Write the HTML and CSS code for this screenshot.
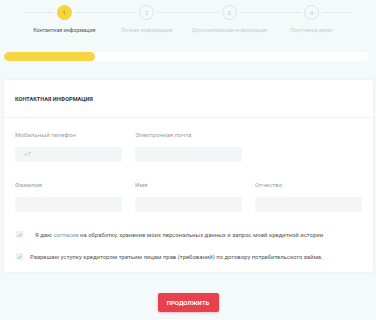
FILE: index.html
```html
<!DOCTYPE html>
<html lang="ru">
<head>
<meta charset="utf-8">
<link rel="stylesheet" href="styles.css">
</head>
<body>
<div class="steps">
  <div class="step active"><div class="circle">1</div><div class="slabel">Контактная информация</div></div>
  <div class="step"><div class="circle">2</div><div class="slabel">Личная информация</div></div>
  <div class="step"><div class="circle">3</div><div class="slabel">Дополнительная информация</div></div>
  <div class="step"><div class="circle">4</div><div class="slabel">Получение денег</div></div>
</div>
<div class="progress"><div class="fill" style="width:25%"></div></div>
<div class="card">
  <div class="card-head">КОНТАКТНАЯ ИНФОРМАЦИЯ</div>
  <div class="card-body">
    <div class="row">
      <div class="field"><div class="flabel">Мобильный телефон</div><div class="input">+7</div></div>
      <div class="field"><div class="flabel">Электронная почта</div><div class="input"></div></div>
      <div class="field empty"></div>
    </div>
    <div class="row">
      <div class="field"><div class="flabel">Фамилия</div><div class="input"></div></div>
      <div class="field"><div class="flabel">Имя</div><div class="input"></div></div>
      <div class="field"><div class="flabel">Отчество</div><div class="input"></div></div>
    </div>
    <div class="check first"><span class="box"><svg viewBox="0 0 8 8" width="6" height="6"><path d="M1.5 4.2 L3.2 5.8 L6.5 2.2" fill="none" stroke="#7fbf7a" stroke-width="1.1"/></svg></span><span class="ctext">Я даю <span class="link">согласие</span> на обработку, хранение моих персональных данных и запрос моей кредитной истории</span></div>
    <div class="check"><span class="box"><svg viewBox="0 0 8 8" width="6" height="6"><path d="M1.5 4.2 L3.2 5.8 L6.5 2.2" fill="none" stroke="#7fbf7a" stroke-width="1.1"/></svg></span><span class="ctext">Разрешаю уступку кредитором третьим лицам прав (требований) по договору потребительского займа.</span></div>
  </div>
</div>
<div class="actions"><button class="btn">ПРОДОЛЖИТЬ</button></div>
</body>
</html>
```
FILE: styles.css
```css
html, body { margin: 0; padding: 0; }
body {
  background: #f4f9fa;
  font-family: Roboto, "Noto Sans", sans-serif;
  color: #333;
  width: 376px;
  height: 320px;
  overflow: hidden;
}
.steps {
  display: grid;
  grid-template-columns: repeat(4, 1fr);
  margin: 0 23px;
  padding-top: 5px;
  position: relative;
  height: 42px;
}
.steps::before {
  content: "";
  position: absolute;
  left: 0; right: 0; top: 12px;
  height: 1px;
  background: #e3e8ea;
}
.step {
  display: flex;
  flex-direction: column;
  align-items: center;
  position: relative;
}
.circle {
  width: 13px; height: 13px;
  border-radius: 50%;
  border: 1px solid #dde2e4;
  background: #f4f9fa;
  box-shadow: 0 0 0 3px #f4f9fa;
  color: #c4c9cc;
  font-size: 6px;
  line-height: 13px;
  text-align: center;
  box-sizing: content-box;
}
.step.active .circle {
  background: #f6d43c;
  border-color: #f6d43c;
  color: #9a8420;
}
.slabel {
  margin-top: 7px;
  font-size: 5.3px;
  color: #c9ced1;
  white-space: nowrap;
}
.step.active .slabel { color: #555; }
.progress {
  margin: 5px 7px 0 4px;
  height: 9px;
  background: #fff;
  border-radius: 5px;
  overflow: hidden;
}
.fill {
  height: 100%;
  background: #f6d544;
  border-radius: 5px;
}
.card {
  margin: 19px 3px 0 4px;
  background: #fff;
  border-radius: 3px;
  box-shadow: 0 0 3px rgba(150, 180, 190, 0.18);
  padding-bottom: 12px;
}
.card-head {
  font-size: 5.6px;
  font-weight: 700;
  color: #333;
  padding: 16px 11px 14px;
  border-bottom: 1px solid #eef2f3;
  line-height: 7px;
}
.card-body { padding: 13px 11px 0; }
.row {
  display: grid;
  grid-template-columns: repeat(3, 107px);
  column-gap: 13px;
  margin-bottom: 19px;
}
.flabel {
  font-size: 6.2px;
  color: #9a9fa2;
  line-height: 8px;
  margin-bottom: 8px;
}
.input {
  height: 15px;
  background: #f4f5f6;
  border-radius: 2px;
  font-size: 6.2px;
  color: #c3c6c8;
  line-height: 15px;
  padding-left: 9px;
}
.check {
  display: flex;
  align-items: center;
  font-size: 5.95px;
  line-height: 7px;
  color: #555;
  margin-left: 1px;
}
.check + .check { margin-top: 15px; }
.box {
  width: 7px; height: 7px;
  background: #e9f4e8;
  border-radius: 1px;
  display: flex;
  align-items: center;
  justify-content: center;
  margin-right: 7px;
  flex: none;
}
.check.first .box { margin-right: 12px; }
.link { color: #6a9cb8; }
.actions {
  display: flex;
  justify-content: center;
  margin-top: 21px;
}
.btn {
  width: 61px;
  height: 19px;
  border: none;
  border-radius: 2px;
  background: #e8404f;
  color: #fff;
  font-family: Roboto, sans-serif;
  font-weight: 700;
  font-size: 6px;
  padding: 0;
  box-shadow: 0 1px 3px rgba(232, 64, 79, 0.3);
}
```
